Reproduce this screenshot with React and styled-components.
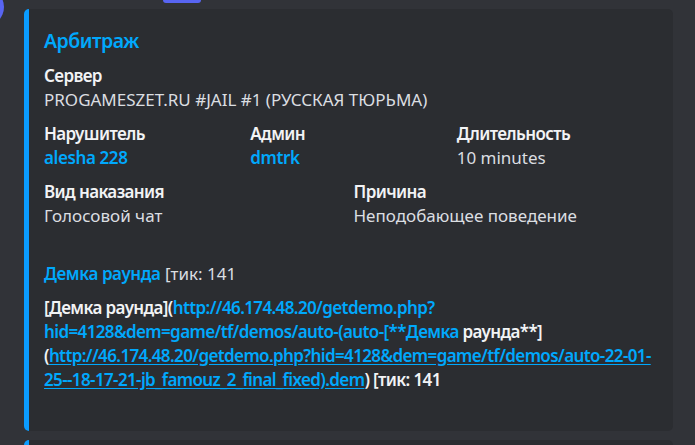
import styled, { createGlobalStyle } from "styled-components";

const GlobalStyle = createGlobalStyle`
  html, body {
    margin: 0;
    padding: 0;
    background: #313338;
    overflow: hidden;
  }
  body {
    font-family: "Noto Sans", "Liberation Sans", sans-serif;
  }
`;

const Page = styled.div`
  position: relative;
  width: 695px;
  height: 445px;
  overflow: hidden;
  background: #313338;
  padding-right: 22px;
  box-sizing: border-box;
`;

// avatar of the previous message, cut off by the window edge
const Avatar = styled.div`
  position: absolute;
  left: -34px;
  top: -12px;
  width: 38px;
  height: 38px;
  border-radius: 50%;
  background: #5865f2;
`;

const TopBar = styled.div`
  height: 9px;
  display: flex;
`;

const Pill = styled.div`
  margin-left: 163px;
  width: 38px;
  height: 3px;
  border-radius: 0 0 6px 6px;
  background: #5865f2;
`;

const Embed = styled.div`
  margin-left: 24px;
  background: #2b2d31;
  border-left: 5px solid #0a9cff;
  border-radius: 5px;
  padding: ${(p) => (p.$stub ? "0" : "10px 20px 15px 15px")};
  height: ${(p) => (p.$stub ? "40px" : "auto")};
  margin-top: ${(p) => (p.$stub ? "9px" : "0")};
  color: #dbdee1;
  font-size: 17px;
  line-height: 24px;
`;

const Title = styled.div`
  margin-top: 8px;
  font-size: 19.5px;
  line-height: 27px;
  font-weight: 600;
  letter-spacing: -0.5px;
  color: #00a8fc;
`;

const Fields = styled.div`
  margin-top: 10px;
  display: grid;
  grid-template-columns: repeat(6, 1fr);
  column-gap: 10px;
  row-gap: 10px;
`;

const Field = styled.div`
  grid-column: ${(p) => p.$col};
  min-width: 0;
`;

const Name = styled.div`
  font-weight: 600;
  color: #f2f3f5;
  font-size: 17px;
  line-height: 24px;
  letter-spacing: -0.62px;
  min-height: 24px;
  white-space: ${(p) => (p.$nowrap ? "nowrap" : "normal")};
`;

const Value = styled.div`
  color: #dbdee1;
  font-size: 17px;
  line-height: 24px;
  min-height: 24px;
`;

const Link = styled.span`
  color: #00a8fc;
  font-weight: ${(p) => (p.$bold ? 600 : "inherit")};
  letter-spacing: ${(p) => (p.$bold ? "-0.4px" : "inherit")};
  text-decoration: ${(p) => (p.$underline ? "underline" : "none")};
  text-underline-offset: 2px;
`;

const fields = [
  { name: "Сервер", value: "PROGAMESZET.RU #JAIL #1 (РУССКАЯ ТЮРЬМА)", col: "1 / 7" },
  { name: "Нарушитель", value: <Link $bold>alesha 228</Link>, col: "1 / 3" },
  { name: "Админ", value: <Link $bold>dmtrk</Link>, col: "3 / 5" },
  { name: "Длительность", value: "10 minutes", col: "5 / 7" },
  { name: "Вид наказания", value: "Голосовой чат", col: "1 / 4" },
  { name: "Причина", value: "Неподобающее поведение", col: "4 / 7" },
];

export default function App() {
  return (
    <Page>
      <GlobalStyle />
      <Avatar />
      <TopBar>
        <Pill />
      </TopBar>
      <Embed>
        <Title>Арбитраж</Title>
        <Fields>
          {fields.map((f) => (
            <Field key={f.name} $col={f.col}>
              <Name>{f.name}</Name>
              <Value>{f.value}</Value>
            </Field>
          ))}
          <Field $col="1 / 7">
            <Name>{"\u200b"}</Name>
            <Value>
              <Link $bold>Демка раунда</Link> [тик: 141
            </Value>
          </Field>
          <Field $col="1 / 7">
            <Name $nowrap>
              [Демка раунда](
              <Link>
                http://46.174.48.20/getdemo.php?
                <br />
                hid=4128&amp;dem=game/tf/demos/auto-(auto-[**Демка
              </Link>{" "}
              раунда**]
              <br />(
              <Link $underline>
                http://46.174.48.20/getdemo.php?hid=4128&amp;dem=game/tf/demos/auto-22-01-
                <br />
                25--18-17-21-jb_famouz_2_final_fixed).dem
              </Link>
              ) [тик: 141
            </Name>
            <Value>{"\u200b"}</Value>
          </Field>
        </Fields>
      </Embed>
      <Embed $stub />
    </Page>
  );
}
